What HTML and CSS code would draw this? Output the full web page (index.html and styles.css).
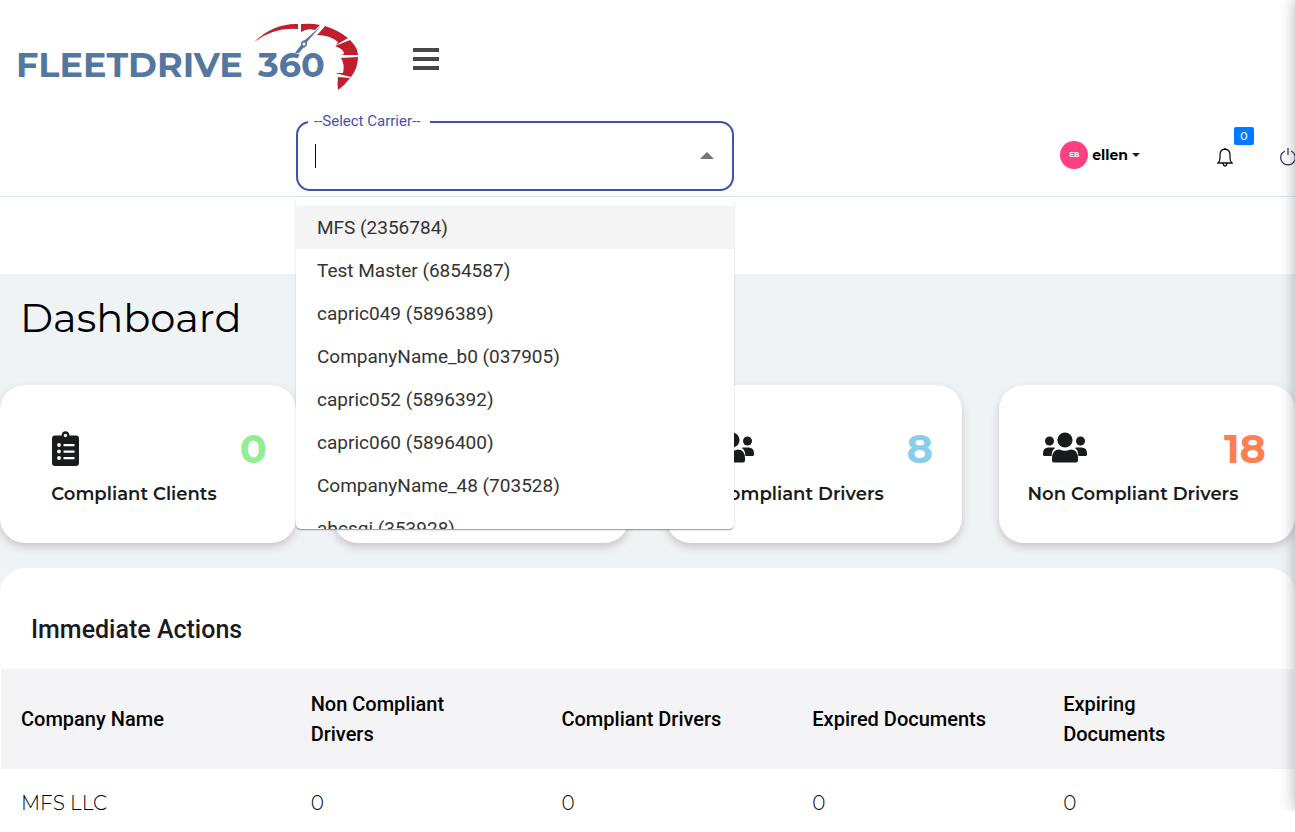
FILE: index.html
```html
<!DOCTYPE html>
<html lang="en">
<head>
<meta charset="utf-8">
<meta name="viewport" content="width=device-width, initial-scale=1">
<title>FleetDrive 360 - Dashboard</title>
<link rel="stylesheet" href="styles.css">
</head>
<body>
<svg width="0" height="0" class="sprite" aria-hidden="true">
  <symbol id="users" viewBox="0 0 44 31">
    <circle cx="6.500" cy="9" r="4.500"/><circle cx="37.500" cy="9" r="4.500"/>
    <circle cx="22" cy="8" r="7.600"/>
    <path d="M5.500 15.500h5.500l1.200.6C9.800 17.700 8.800 20 8.600 24H1.500Q0 24 0 22.500V21.500Q0 15.500 5.500 15.500zM38.500 15.500H33l-1.200.6c2.400 1.600 3.400 3.900 3.600 7.900h7.100Q44 24 44 22.500V21.500Q44 15.500 38.500 15.500z"/>
    <path d="M16.500 17.500Q22 20 27.500 17.500Q35 17.500 35 26.500V28.500Q35 30.500 33 30.500H11Q9 30.500 9 28.500V26.500Q9 17.500 16.500 17.500z"/>
  </symbol>
</svg>
<div class="page">
  <header class="header">
    <div class="brand-row">
      <a class="brand" href="#" aria-label="FleetDrive 360">
        <svg width="346" height="72" viewBox="0 0 346 72">
          <g class="logo-text"><text x="-1" y="57">FLEETDRIVE</text><text x="241" y="57">360</text></g>
          <path fill="#be1e2d" d="M237 22Q257 3 281 4V9Q257 7 237 22zM284 4Q295 3 303 5L298 10Q290 8 284 12zM308 6Q321 10 331 18L319 25L321 22Q313 15 300 15L302 13zM333 20Q341 28 341 35H324L327 34Q327 29 318 26zM341 37Q341 48 334 57L318 53L326 53Q328 44 324 38zM333 58Q328 65 321 70Q320 64 321 57z"/>
          <path fill="#54779f" d="M304 6L290 22Q291 27 286 28L282 33H278L284 25Q283 21 288 20z"/>
          <circle cx="287" cy="24" r="1.500" fill="#fff"/>
        </svg>
      </a>
      <button class="menu" type="button" aria-label="Toggle menu">
        <svg width="26" height="22" viewBox="0 0 26 22"><path fill="#47474b" d="M0 0h26v4H0zM0 9h26v4H0zM0 18h26v4H0z"/></svg>
      </button>
    </div>
    <div class="tools-row">
      <div class="carrier">
        <div class="field">
          <label class="field-label" for="carrier">--Select Carrier--</label>
          <span class="cursor"></span>
          <input class="field-input" id="carrier" type="text" autocomplete="off">
          <button class="field-arrow" type="button" aria-label="Close list"><svg width="14" height="8" viewBox="0 0 14 8"><path fill="#757575" d="M0 7L7 0l7 7z"/></svg></button>
        </div>
        <ul class="options">
          <li class="option option-active">MFS (2356784)</li>
          <li class="option">Test Master (6854587)</li>
          <li class="option">capric049 (5896389)</li>
          <li class="option">CompanyName_b0 (037905)</li>
          <li class="option">capric052 (5896392)</li>
          <li class="option">capric060 (5896400)</li>
          <li class="option">CompanyName_48 (703528)</li>
          <li class="option">abcsgi (353928)</li>
        </ul>
      </div>
      <div class="account">
        <button class="user" type="button"><span class="avatar">EB</span>ellen<span class="caret"></span></button>
        <button class="bell" type="button" aria-label="Notifications">
          <svg width="16" height="19" viewBox="0 0 16 19" fill="none" stroke="#111" stroke-width="1.300"><path d="M8 1Q3 1.500 3 7V10Q3 13 1 15H15Q13 13 13 10V7Q13 1.500 8 1zM6 15.500Q6.500 18 8 18T10 15.500M8 0v1"/></svg>
          <span class="badge">0</span>
        </button>
        <button class="power" type="button" aria-label="Log out"><svg width="16" height="18" viewBox="0 0 16 18" fill="none" stroke="#303050" stroke-width="1.200"><path d="M5 3A7.300 7.300 0 1 0 11 3M8 0v7"/></svg></button>
      </div>
    </div>
  </header>
  <main class="main">
    <h1 class="title">Dashboard</h1>
    <section class="cards">
      <article class="card">
        <div class="card-info">
          <svg class="card-icon" width="44" height="35" viewBox="0 0 44 35"><path fill="#191b1e" fill-rule="evenodd" d="M11 4.500h6.500Q18 .2 21.500 .2T25.500 4.500H32Q35 4.500 35 7.500V32Q35 35 32 35H11Q8 35 8 32V7.500Q8 4.500 11 4.500z"/><g fill="#fff"><circle cx="21.500" cy="4.500" r="1.700"/><circle cx="15" cy="14" r="1.900"/><circle cx="15" cy="20.500" r="1.900"/><circle cx="15" cy="27" r="1.900"/><path d="M19.500 13h11v2.300H19.500zM19.500 19.500h11v2.300H19.500zM19.500 26h11v2.300H19.500z"/></g></svg>
          <h2 class="card-title">Compliant Clients</h2>
        </div>
        <span class="count green">0</span>
      </article>
      <article class="card"></article>
      <article class="card">
        <div class="card-info">
          <svg class="card-icon" width="44" height="35"><use href="#users" width="44" height="31" y="1"/></svg>
          <h2 class="card-title">Compliant Drivers</h2>
        </div>
        <span class="count blue">8</span>
      </article>
      <article class="card">
        <div class="card-info">
          <svg class="card-icon" width="44" height="35"><use href="#users" width="44" height="31" y="1"/></svg>
          <h2 class="card-title">Non Compliant Drivers</h2>
        </div>
        <span class="count orange">18</span>
      </article>
    </section>
    <section class="panel">
      <h2 class="panel-title">Immediate Actions</h2>
      <table class="table">
        <thead><tr><th class="company">Company Name</th><th>Non Compliant<br>Drivers</th><th>Compliant Drivers</th><th>Expired Documents</th><th>Expiring<br>Documents</th></tr></thead>
        <tbody><tr><td>MFS LLC</td><td>0</td><td>0</td><td>0</td><td>0</td></tr></tbody>
      </table>
    </section>
  </main>
</div>
<div class="drawer-edge"><aside class="drawer"></aside></div>
</body>
</html>
```
FILE: styles.css
```css
* { box-sizing: border-box; }
body { margin: 0; background: #fff; color: #191b1e; font-family: Montserrat, Inter, sans-serif; overflow: hidden; }
button { padding: 0; border: 0; background: none; color: inherit; font-family: inherit; display: flex; align-items: center; }
svg { display: block; flex: none; }
.sprite { position: absolute; }
.header { height: 197px; border-bottom: 1px solid #dee6ed; }
.brand-row { display: flex; align-items: flex-start; height: 121px; padding: 20px 17px 0; gap: 50px; }
.brand svg { overflow: visible; }
.logo-text { font: 700 35px Montserrat, "DejaVu Sans", sans-serif; fill: #54779f; }
.menu { margin-top: 28px; }
.tools-row { display: flex; justify-content: space-between; padding-left: 296px; }
.carrier { position: relative; width: 438px; font-family: Roboto, sans-serif; }
.field { position: relative; display: flex; align-items: center; height: 70px; padding: 0 18px 0 17px; border: 2px solid #3f51b5; border-radius: 14px; }
.field-label { position: absolute; top: -12px; left: 10px; padding: 0 10px 0 6px; background: #fff; color: #3f51b5; font-size: 15px; line-height: 20px; }
.field-input { flex: 1; min-width: 0; height: 40px; padding: 0; border: 0; outline: 0; background: none; font: 18px Roboto, sans-serif; }
.cursor { width: 1px; height: 24px; background: #111; }
.options { position: absolute; z-index: 2; top: 76px; left: 0; right: 0; height: 332px; margin: 0; padding: 9px 0; overflow: hidden; list-style: none; background: #fff; border-radius: 5px; box-shadow: 0 2px 1px -1px rgba(0,0,0,.2), 0 1px 1px rgba(0,0,0,.14), 0 1px 3px rgba(0,0,0,.12); }
.option { padding: 0 21px; font-size: 19px; line-height: 43px; color: #333; }
.option-active { background: #f4f4f4; }
.account { display: flex; align-items: flex-start; flex: none; margin-right: -1px; }
.user { gap: 4px; margin: 20px 77px 0 0; font-size: 14px; font-weight: 700; color: #000; }
.avatar { width: 28px; height: 28px; border-radius: 50%; background: #ff4081; color: #fff; font-size: 7px; line-height: 28px; text-align: center; }
.caret { border: 4px solid transparent; border-top-color: #191b1e; border-bottom: 0; }
.bell { position: relative; margin: 27px 47px 0 0; }
.badge { position: absolute; left: 17px; top: -21px; width: 20px; border-radius: 2px; background: #007bff; color: #fff; font-size: 11px; font-weight: 500; line-height: 18px; text-align: center; }
.power { margin-top: 27px; }
.main { margin-top: 77px; background: #eff3f6; }
.title { margin: 0; padding: 14px 20px 37px; color: #000; font-size: 40px; font-weight: 400; line-height: 60px; }
.cards { display: grid; grid-template-columns: repeat(4, 1fr); gap: 37px; }
.card { display: flex; justify-content: space-between; height: 158px; padding: 46px 29px 0 20px; border-radius: 25px; background: #fff; box-shadow: 0 4px 8px #cbc4c6; }
.card-info { width: 228px; }
.card-icon { margin-left: 24px; fill: #191b1e; }
.card-title { margin: 16px 0 0; font-size: 18px; font-weight: 600; line-height: 24px; text-align: center; white-space: nowrap; }
.count { width: 0; display: flex; justify-content: flex-end; font-size: 40px; font-weight: 700; line-height: 36px; }
.green { color: #90ee90; }
.blue { color: #87ceeb; }
.orange { color: #ff7f50; }
.panel { margin-top: 25px; padding: 42px 1px 0; border-radius: 25px 25px 0 0; background: #fff; }
.panel-title { margin: 0; padding: 0 30px 19px; font: 500 25px/40px Roboto, sans-serif; }
.table { width: 100%; table-layout: fixed; border-collapse: collapse; text-align: left; font-size: 20px; line-height: 30px; color: #000; }
.table th { height: 100px; padding: 20px; font-family: Roboto, sans-serif; font-weight: 500; background: #f4f4f7; }
.table .company { width: 22.4%; }
.table td { padding: 19px 20px; font-weight: 300; }
.drawer-edge { position: fixed; z-index: 3; top: 0; right: 0; bottom: 21px; width: 20px; overflow: hidden; pointer-events: none; }
.drawer { height: 100%; margin-left: 100%; width: 300px; box-shadow: 0 0 15px rgba(0,0,0,.3); }
```
